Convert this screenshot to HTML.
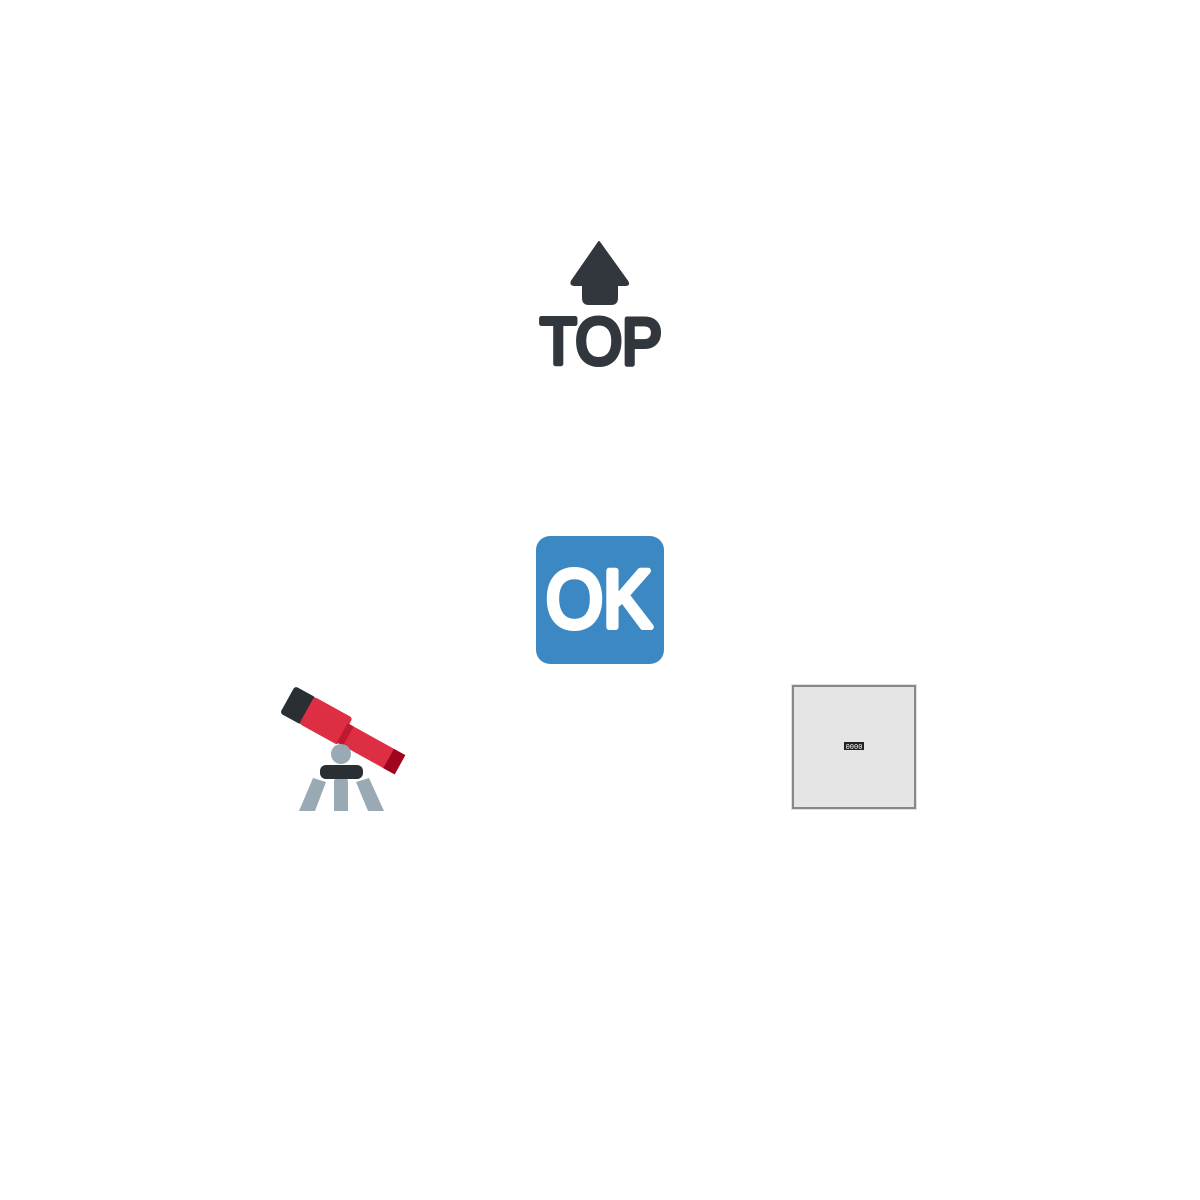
<!DOCTYPE html>
<html><head><style>
html,body{margin:0;padding:0;background:#fff;width:1200px;height:1200px;overflow:hidden}
svg{position:absolute;left:0;top:0}
</style></head><body>
<svg width="1200" height="1200" viewBox="0 0 1200 1200">
<!-- TOP -->
<path d="M599 242 L572 281 Q570 285 575 285 L583 285 L583 298 Q583 304 589 304 L611 304 Q617 304 617 298 L617 285 L625 285 Q630 285 627 281 Z" fill="#31373d" stroke="#31373d" stroke-width="2" stroke-linejoin="round"/>
<text x="540" y="364" textLength="122" lengthAdjust="spacingAndGlyphs" font-family="Liberation Sans, sans-serif" font-size="66" fill="#31373d" stroke="#31373d" stroke-width="5" stroke-linejoin="round" stroke-linecap="round">TOP</text>
<!-- OK -->
<rect x="536" y="536" width="128" height="128" rx="14" fill="#3b88c3"/>
<text x="546" y="627" textLength="106" lengthAdjust="spacingAndGlyphs" font-family="Liberation Sans, sans-serif" font-size="82" fill="#fff" stroke="#fff" stroke-width="6" stroke-linejoin="round" stroke-linecap="round">OK</text>
<!-- telescope -->
<g transform="translate(295,686) rotate(29)">
<rect x="0" y="0" width="24" height="31" rx="3" fill="#292f33"/>
<rect x="22" y="0" width="44" height="31" rx="3" fill="#dd2e44"/>
<rect x="63" y="7" width="67" height="22" fill="#dd2e44"/>
<rect x="64" y="7" width="7" height="22" fill="#be1931"/>
<rect x="117" y="7" width="13" height="22" fill="#a0041e"/>
</g>
<circle cx="341" cy="754" r="10" fill="#99aab5"/>
<rect x="334" y="776" width="14" height="35" rx="6" fill="#99aab5"/>
<rect x="334" y="790" width="14" height="21" fill="#99aab5"/>
<polygon points="313,778 326,782 315,811 299,811" fill="#99aab5"/>
<polygon points="356,782 369,778 384,811 368,811" fill="#99aab5"/>
<rect x="320" y="765" width="43" height="14" rx="6" fill="#292f33"/>
<!-- box -->
<rect x="791" y="684" width="126" height="126" fill="#e0e0e0"/>
<rect x="793" y="686" width="122" height="122" fill="#e5e5e5" stroke="#888" stroke-width="2"/>
<rect x="844" y="742" width="20" height="8" fill="#222"/>
<text x="854" y="749" text-anchor="middle" font-family="Liberation Mono, monospace" font-size="7" fill="#fff">0000</text>
</svg>
</body></html>
